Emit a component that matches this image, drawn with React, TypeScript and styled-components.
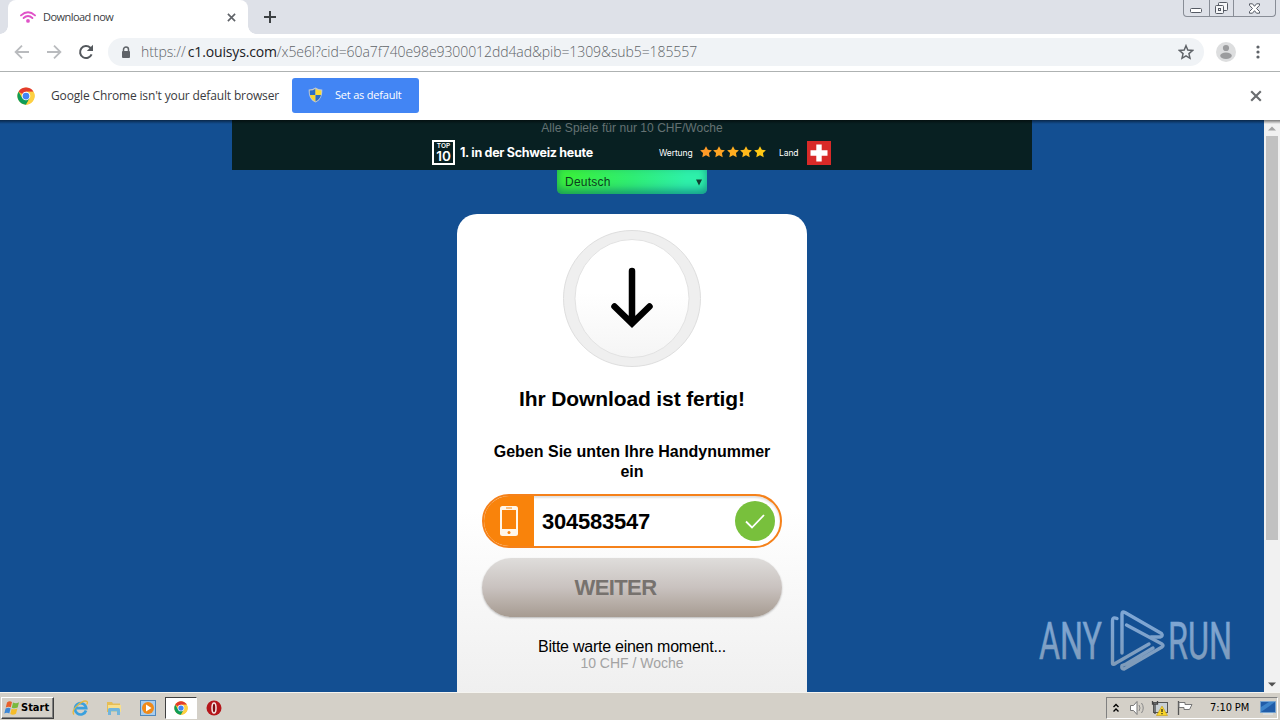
import React from 'react';
import styled, { createGlobalStyle } from 'styled-components';

const ui = "'Open Sans', 'Noto Sans', sans-serif";
const arial = "'Liberation Sans', Arial, sans-serif";
const tahoma = "'DejaVu Sans Condensed', 'DejaVu Sans', sans-serif";

const GlobalStyle = createGlobalStyle`
  * {
    box-sizing: border-box;
  }

  body {
    margin: 0;
    overflow: hidden;
    font-family: ${arial};
  }

  svg {
    display: block;
    flex-shrink: 0;
  }
`;

const Screen = styled.div`
  width: 1280px;
  height: 720px;
  display: flex;
  flex-direction: column;
  overflow: hidden;
  background: #fff;
`;

const TabStrip = styled.header`
  height: 34px;
  flex-shrink: 0;
  display: flex;
  justify-content: space-between;
  background: #dee1e8;
`;

const Tabs = styled.div`
  display: flex;
  align-items: center;
  padding-left: 8px;
`;

const Tab = styled.div`
  position: relative;
  width: 240px;
  height: 34px;
  display: flex;
  align-items: center;
  padding: 0 12px;
  border-radius: 8px 8px 0 0;
  background: #fff;

  &::before,
  &::after {
    content: '';
    position: absolute;
    bottom: 0;
    width: 8px;
    height: 8px;
  }

  &::before {
    left: -8px;
    background: radial-gradient(circle at 0 0, transparent 7.5px, #fff 8px);
  }

  &::after {
    right: -8px;
    background: radial-gradient(circle at 100% 0, transparent 7.5px, #fff 8px);
  }
`;

const TabTitle = styled.span`
  flex: 1;
  margin-left: 7px;
  font: 400 11px/16px ${ui};
  letter-spacing: -0.55px;
  color: #3c4043;
  white-space: nowrap;
`;

const NewTab = styled.div`
  margin-left: 16px;
`;

const WindowButtons = styled.div`
  display: flex;
  width: 93px;
  height: 17px;
  margin-right: 4px;
  border: 1px solid #888d96;
  border-top: none;
  border-radius: 0 0 4px 4px;
`;

const WindowButton = styled.div<{ $width: number }>`
  width: ${p => p.$width}px;
  display: flex;
  align-items: center;
  justify-content: center;

  & + & {
    border-left: 1px solid #888d96;
  }
`;

const Toolbar = styled.nav`
  height: 38px;
  flex-shrink: 0;
  display: flex;
  align-items: center;
  padding: 0 10px 1px 14px;
  border-bottom: 1px solid #aeb2b2;
`;

const Reload = styled.div`
  margin: 0 14px 0 16px;
`;

const Forward = styled.div`
  margin-left: 16px;
`;

const AddressBar = styled.div`
  width: 1096px;
  height: 28px;
  flex-shrink: 0;
  display: flex;
  align-items: center;
  justify-content: space-between;
  padding: 0 10px 0 12px;
  border-radius: 14px;
  background: #f0f3f6;
`;

const Address = styled.div`
  display: flex;
  align-items: center;
  gap: 9px;
`;

const Url = styled.span`
  font: 300 14px/20px ${ui};
  letter-spacing: -0.08px;
  color: #5f6468;
  white-space: nowrap;
`;

const Host = styled.span`
  margin-left: 2px;
  font-weight: 400;
  letter-spacing: -0.15px;
  color: #202124;
`;

const Avatar = styled.div`
  margin-left: 12px;
`;

const MenuDots = styled.div`
  margin-left: 20px;
`;

const InfoBar = styled.div`
  height: 48px;
  flex-shrink: 0;
  display: flex;
  align-items: center;
  padding: 0 18px 0 17px;
`;

const InfoText = styled.span`
  width: 257px;
  padding-left: 16px;
  margin-bottom: 1px;
  font: 400 12px/18px ${ui};
  letter-spacing: -0.15px;
  color: #3a3b3e;
  white-space: nowrap;
`;

const DefaultButton = styled.button`
  width: 127px;
  height: 35px;
  display: flex;
  align-items: center;
  gap: 12px;
  margin: 0 auto 2px 0;
  padding: 0 0 0 16px;
  border: none;
  border-radius: 3px;
  background: #4285f4;
  color: #fff;
  font: 400 11px/16px ${ui};
  letter-spacing: -0.2px;
  white-space: nowrap;
`;

const Viewport = styled.div`
  position: relative;
  height: 572px;
  flex-shrink: 0;
  display: flex;

  &::before {
    content: '';
    position: absolute;
    left: 0;
    top: 0;
    width: 100%;
    height: 4px;
    z-index: 1;
    background: linear-gradient(rgba(0, 0, 0, 0.5), transparent);
  }
`;

const Page = styled.main`
  position: relative;
  flex: 1;
  height: 572px;
  display: flex;
  flex-direction: column;
  align-items: center;
  overflow: hidden;
  background: #134f92;
`;

const Banner = styled.div`
  width: 800px;
  height: 50px;
  flex-shrink: 0;
  display: flex;
  flex-direction: column;
  align-items: center;
  background: #082022;
`;

const BannerText = styled.div`
  height: 20px;
  font-size: 12px;
  line-height: 16px;
  letter-spacing: 0.05px;
  color: #657273;
`;

const BannerRow = styled.div`
  width: 400px;
  height: 25px;
  display: flex;
  align-items: center;
  color: #fff;
  font-family: Inter, sans-serif;
  white-space: nowrap;
`;

const TopTen = styled.div`
  width: 23px;
  height: 25px;
  display: flex;
  flex-direction: column;
  align-items: center;
  border: 2px solid #fff;
`;

const TopTenLabel = styled.span`
  font-size: 6.5px;
  font-weight: 600;
  line-height: 8px;
`;

const TopTenNumber = styled.span`
  font-size: 13.5px;
  font-weight: 600;
  line-height: 13px;
`;

const Rank = styled.span`
  width: 204px;
  padding: 0 0 1px 5px;
  font-size: 12.5px;
  font-weight: 700;
  letter-spacing: -0.28px;
`;

const BannerLabel = styled.span<{ $width: number }>`
  width: ${p => p.$width}px;
  font-size: 8.5px;
  letter-spacing: -0.1px;
`;

const Stars = styled.div`
  width: 79px;
  display: flex;
  gap: 1.4px;
  margin-bottom: 1px;
`;

const Language = styled.div`
  width: 150px;
  height: 24px;
  flex-shrink: 0;
  display: flex;
  align-items: center;
  justify-content: space-between;
  padding: 0 4px 0 8px;
  border-radius: 0 0 5px 5px;
  background: linear-gradient(100deg, #39f03f 10%, #2fed74 50%, #2ef0aa 85%);
  box-shadow: inset 0 -4px 8px rgba(0, 80, 110, 0.55);
  color: #0c3c20;
  font-size: 12px;
  letter-spacing: 0.25px;
`;

const Card = styled.section`
  width: 350px;
  height: 520px;
  flex-shrink: 0;
  display: flex;
  flex-direction: column;
  align-items: center;
  margin-top: 20px;
  padding-top: 16px;
  border-radius: 20px 20px 0 0;
  background: linear-gradient(#fff 57%, #eeeeee 95%);
  color: #000;
`;

const Title = styled.h1`
  margin: 20px 0 0;
  font-size: 21px;
  line-height: 24px;
  letter-spacing: -0.12px;
  white-space: nowrap;
`;

const Hint = styled.h2`
  width: 300px;
  margin: 31px 0 0;
  font-size: 16px;
  line-height: 20px;
  text-align: center;
`;

const PhoneField = styled.div`
  width: 300px;
  height: 54px;
  display: flex;
  align-items: center;
  margin-top: 12px;
  padding-right: 5px;
  border: 2px solid #f5811a;
  border-radius: 27px;
  overflow: hidden;
  background: #fff;
  box-shadow: inset 0 2px 2px rgba(0, 0, 0, 0.12);
`;

const PhoneBadge = styled.div`
  width: 50px;
  height: 50px;
  display: flex;
  align-items: center;
  justify-content: center;
  background: #f9830b;
`;

const PhoneNumber = styled.span`
  flex: 1;
  padding: 1px 0 0 8px;
  font-size: 22px;
  font-weight: 700;
  letter-spacing: -0.25px;
`;

const Submit = styled.button`
  width: 300px;
  height: 59px;
  margin-top: 10px;
  padding: 0 33px 0 0;
  border: none;
  border-radius: 30px;
  background: linear-gradient(#dfdddb, #c9c2bf 50%, #a69b91);
  box-shadow: 0 1px 2px rgba(0, 0, 0, 0.25);
  color: #77726e;
  font: 700 22px/26px ${arial};
  letter-spacing: -0.6px;
`;

const Wait = styled.p`
  margin: 21px 0 0;
  font-size: 16px;
  line-height: 17px;
  letter-spacing: -0.25px;
`;

const Price = styled.p`
  margin: 0;
  font-size: 14px;
  line-height: 16px;
  color: #a3a3a3;
`;

const Watermark = styled.div`
  position: absolute;
  left: 1036px;
  top: 488px;
`;

const ScrollBar = styled.div`
  width: 16px;
  display: flex;
  flex-direction: column;
  align-items: center;
  justify-content: space-between;
  background: #f1f1f1;
`;

const ScrollArrow = styled.div`
  height: 16px;
  display: flex;
  align-items: center;
`;

const Thumb = styled.div`
  width: 12px;
  height: 404px;
  margin-bottom: auto;
  background: #c1c1c1;
`;

const TaskBar = styled.footer`
  height: 28px;
  flex-shrink: 0;
  display: flex;
  align-items: center;
  padding: 2px 2px 0 1px;
  border-top: 1px solid #f5f4f0;
  background: #d4d0c8;
`;

const Start = styled.div`
  width: 53px;
  height: 22px;
  display: flex;
  align-items: center;
  gap: 1px;
  padding-left: 2px;
  border: 1px solid;
  border-color: #fff #404040 #404040 #fff;
  box-shadow: inset -1px -1px #808080;
  color: #000;
  font: 700 11px/14px ${tahoma};
`;

const QuickLaunch = styled.div`
  display: flex;
  align-items: center;
  margin-left: 9px;
`;

const TaskItem = styled.div<{ $active?: boolean }>`
  width: ${p => (p.$active ? 32 : 34)}px;
  height: 22px;
  display: flex;
  align-items: center;
  justify-content: center;
  border: 1px solid;
  border-color: ${p => (p.$active ? '#404040 #fff #fff #404040' : 'transparent')};
  background: ${p => (p.$active ? '#fff' : 'none')};

  & + &:last-child {
    margin-left: 1px;
  }
`;

const Tray = styled.div`
  width: 172px;
  height: 22px;
  display: flex;
  align-items: center;
  margin-left: auto;
  padding-left: 5px;
  border: 1px solid;
  border-color: #808080 #fff #fff #808080;
`;

const Clock = styled.span`
  width: 50px;
  margin-left: 15px;
  font: 400 11px/14px ${tahoma};
  letter-spacing: -0.1px;
  color: #000;
  white-space: nowrap;
`;

const ChromeLogo = ({ size }: { size: number }) => (
  <svg width={size} height={size} viewBox="0 0 48 48">
    <circle cx="24" cy="24" r="23" fill="#fbc02d" />
    <path d="M24 24 4.1 12.5A23 23 0 0 1 43.9 12.5H24z" fill="#e33b2e" />
    <path d="M4.1 12.5A23 23 0 0 0 24 47L34 29.8 24 24l-10 5.5z" fill="#0f9d58" />
    <path d="M24 12.5h19.9A23 23 0 0 1 24 47l10-17.3z" fill="#fdd042" />
    <circle cx="24" cy="24" r="11.5" fill="#fff" />
    <circle cx="24" cy="24" r="9" fill="#4285f4" />
  </svg>
);

const Cross = ({ size = 9, color = '#5f6368' }) => (
  <svg width={size} height={size} viewBox="0 0 10 10">
    <path d="M1 1l8 8M9 1L1 9" stroke={color} strokeWidth="1.8" />
  </svg>
);

const Arrow = ({ flip = false }) => (
  <svg width="16" height="16" viewBox="0 0 16 16">
    <path
      d={flip ? 'M1 8h13M8 1.6L14.4 8 8 14.4' : 'M15 8H2M8 1.6L1.6 8 8 14.4'}
      fill="none"
      stroke="#b9bbbe"
      strokeWidth="1.8"
    />
  </svg>
);

const Shield = () => (
  <svg width="15" height="16" viewBox="0 0 15 16">
    <path d="M7.5.5Q10.5 2.6 14.3 2.5C14.5 9 12.5 13.2 7.5 15.6 2.5 13.2.5 9 .7 2.5Q4.5 2.6 7.5.5z" fill="#c2c9cf" />
    <path d="M7.5 1.7V8H2C1.8 6.5 1.7 5 1.8 3.6Q5 3.5 7.5 1.7z" fill="#2b6dc4" />
    <path d="M7.5 1.7V8H13C13.2 6.5 13.3 5 13.2 3.6Q10 3.5 7.5 1.7z" fill="#fadb32" />
    <path d="M7.5 14.4V8H2Q3 12.2 7.5 14.4z" fill="#f8d52c" />
    <path d="M7.5 14.4V8H13Q12 12.2 7.5 14.4z" fill="#2b6dc4" />
  </svg>
);

const starColors = ['#ff9b27', '#ffa423', '#ffad20', '#ffb81b', '#ffc814'];

const Star = ({ color }: { color: string }) => (
  <svg width="12" height="12" viewBox="0 0 24 24">
    <path
      d="M12 .4l3.7 7 8.1 1.2-5.9 5.6 1.5 8.3L12 18.7l-7.4 3.8 1.5-8.3L.2 8.6l8.1-1.2z"
      fill={color}
    />
  </svg>
);

export default function App() {
  return (
    <Screen>
      <GlobalStyle />
      <TabStrip>
        <Tabs>
          <Tab>
            <svg width="16" height="12" viewBox="0 0 16 12">
              <g fill="none" stroke="#e052c8" strokeWidth="1.9" strokeLinecap="round">
                <path d="M1 4.4Q8-2 15 4.4" />
                <path d="M3.6 7Q8 3 12.4 7" />
              </g>
              <circle cx="8" cy="9.9" r="1.9" fill="#e052c8" />
            </svg>
            <TabTitle>Download now</TabTitle>
            <Cross size={9} />
          </Tab>
          <NewTab>
            <svg width="12" height="12" viewBox="0 0 12 12">
              <path d="M6 0v12M0 6h12" stroke="#3c4043" strokeWidth="2" />
            </svg>
          </NewTab>
        </Tabs>
        <WindowButtons>
          <WindowButton $width={25}>
            <svg width="12" height="15" viewBox="0 0 12 15">
              <rect x=".5" y="7.5" width="11" height="4" rx="1" fill="#fff" stroke="#555a64" />
            </svg>
          </WindowButton>
          <WindowButton $width={25}>
            <svg width="13" height="14" viewBox="0 0 13 14">
              <g fill="#f5f6f8" stroke="#555a64">
                <rect x="3.5" y="1.5" width="9" height="8" rx="1" />
                <rect x=".5" y="4.5" width="8" height="8" rx="1" />
                <rect x="3.5" y="7.5" width="2" height="2" />
              </g>
            </svg>
          </WindowButton>
          <WindowButton $width={42}>
            <svg width="11" height="11" viewBox="0 0 11 11">
              <path
                d="M.5.8h3l2 2.5 2-2.5h3v1.5L7.5 5.5l3 3v1.7h-3l-2-2.5-2 2.5h-3V8.5l3-3-3-3.2z"
                fill="#fff"
                stroke="#555a64"
              />
            </svg>
          </WindowButton>
        </WindowButtons>
      </TabStrip>

      <Toolbar>
        <Arrow />
        <Forward>
          <Arrow flip />
        </Forward>
        <Reload>
          <svg width="16" height="16" viewBox="0 0 16 16">
            <path d="M13.6 10.4A6 6 0 1 1 12.3 3.8L14 5.5" fill="none" stroke="#54585d" strokeWidth="2" />
            <path d="M15 .8V7H8.8z" fill="#54585d" />
          </svg>
        </Reload>
        <AddressBar>
          <Address>
            <svg width="12" height="13" viewBox="0 0 12 13">
              <path d="M3.5 6V3.5a2.5 2.5 0 0 1 5 0V6" fill="none" stroke="#5f6368" strokeWidth="1.5" />
              <rect x="2" y="5" width="8" height="7" rx="1" fill="#5f6368" />
            </svg>
            <Url>
              https://<Host>c1.ouisys.com</Host>/x5e6l?cid=60a7f740e98e9300012dd4ad&amp;pib=1309&amp;sub5=185557
            </Url>
          </Address>
          <svg width="16" height="16" viewBox="0 0 24 24">
            <path
              d="M12 2.5l2.7 6.6 7.1.6-5.4 4.7 1.6 7-6-3.7-6 3.7 1.6-7-5.4-4.7 7.1-.6z"
              fill="none"
              stroke="#5f6368"
              strokeWidth="2.2"
            />
          </svg>
        </AddressBar>
        <Avatar>
          <svg width="20" height="20" viewBox="0 0 20 20">
            <circle cx="10" cy="10" r="10" fill="#dddedf" />
            <circle cx="10" cy="6" r="3.1" fill="#9b9c9e" />
            <ellipse cx="10" cy="13.8" rx="5.8" ry="3.2" fill="#9b9c9e" />
          </svg>
        </Avatar>
        <MenuDots>
          <svg width="4" height="14" viewBox="0 0 4 14">
            <g fill="#5f6368">
              <circle cx="2" cy="2" r="1.6" />
              <circle cx="2" cy="7" r="1.6" />
              <circle cx="2" cy="12" r="1.6" />
            </g>
          </svg>
        </MenuDots>
      </Toolbar>

      <InfoBar>
        <ChromeLogo size={18} />
        <InfoText>Google Chrome isn't your default browser</InfoText>
        <DefaultButton>
          <Shield />
          Set as default
        </DefaultButton>
        <Cross size={12} color="#6a6d70" />
      </InfoBar>

      <Viewport>
        <Page>
          <Banner>
            <BannerText>Alle Spiele für nur 10 CHF/Woche</BannerText>
            <BannerRow>
              <TopTen>
                <TopTenLabel>TOP</TopTenLabel>
                <TopTenNumber>10</TopTenNumber>
              </TopTen>
              <Rank>1. in der Schweiz heute</Rank>
              <BannerLabel $width={41}>Wertung</BannerLabel>
              <Stars>
                {starColors.map(color => (
                  <Star key={color} color={color} />
                ))}
              </Stars>
              <BannerLabel $width={28}>Land</BannerLabel>
              <svg width="24" height="24" viewBox="0 0 24 24">
                <rect width="24" height="24" fill="#d82a28" />
                <path d="M12 3.5v17M3.5 12h17" stroke="#fff" strokeWidth="5.4" />
              </svg>
            </BannerRow>
          </Banner>
          <Language>
            Deutsch
            <svg width="8" height="7" viewBox="0 0 8 7">
              <path d="M1 .5h6L4 6.5z" fill="#123c30" />
            </svg>
          </Language>
          <Card>
            <svg width="138" height="137" viewBox="0 0 138 137">
              <defs>
                <linearGradient id="disc" x1="0" y1="0" x2="0" y2="1">
                  <stop offset=".45" stopColor="#fff" />
                  <stop offset="1" stopColor="#f5f5f5" />
                </linearGradient>
              </defs>
              <ellipse cx="69" cy="68.5" rx="68.5" ry="68" fill="#efefef" stroke="#dedede" />
              <ellipse cx="69" cy="68.5" rx="57" ry="59" fill="url(#disc)" stroke="#e2e2e2" />
              <path d="M69 41v50M51.5 76.5L69 93.5l17.5-17" fill="none" stroke="#000" strokeWidth="6.5" strokeLinecap="round" />
              <path d="M62 86h14l-7 7z" />
            </svg>
            <Title>Ihr Download ist fertig!</Title>
            <Hint>Geben Sie unten Ihre Handynummer ein</Hint>
            <PhoneField>
              <PhoneBadge>
                <svg width="18" height="30" viewBox="0 0 18 30">
                  <rect width="18" height="30" rx="2.5" fill="#fff6ea" />
                  <rect x="2" y="4" width="14" height="19" fill="#f9830b" />
                  <path d="M6 2h6" stroke="#f9830b" />
                  <circle cx="9" cy="26.5" r="1.5" fill="#f9830b" />
                </svg>
              </PhoneBadge>
              <PhoneNumber>304583547</PhoneNumber>
              <svg width="40" height="40" viewBox="0 0 40 40">
                <circle cx="20" cy="20" r="20" fill="#78c03c" />
                <path d="M11 20.5l6 6L29 14" fill="none" stroke="#fff" strokeWidth="1.8" />
              </svg>
            </PhoneField>
            <Submit>WEITER</Submit>
            <Wait>Bitte warte einen moment...</Wait>
            <Price>10 CHF / Woche</Price>
          </Card>
          <Watermark>
            <svg width="210" height="68" viewBox="0 0 210 68">
              <defs>
                <linearGradient id="mark" x1="0" y1="0" x2="0" y2="66" gradientUnits="userSpaceOnUse">
                  <stop offset=".2" stopColor="#7ea6d4" />
                  <stop offset=".85" stopColor="#7f9bb9" />
                </linearGradient>
              </defs>
              <g
                fill="url(#mark)"
                stroke="url(#mark)"
                strokeWidth=".5"
                fontFamily="Roboto, sans-serif"
                fontSize="51"
              >
                <text x="3" y="51" textLength="63" lengthAdjust="spacingAndGlyphs">ANY</text>
                <text x="132" y="51" textLength="64" lengthAdjust="spacingAndGlyphs">RUN</text>
              </g>
              <g fill="none" stroke="url(#mark)" strokeWidth="3.4" strokeLinecap="round" strokeLinejoin="round">
                <path d="M86 45V6q0-3 3-1.500L125.500 25.500q2 2.500-1.500 3.500L115 29" />
                <path d="M81 10.500q-4.500-2-4.500 2V55q0 2.500 3.500 0L113 36" />
                <path d="M90.500 17L126 36q2 1.500 0 3L88 61q-3 0-2-3.500l4-1.500 27-16" />
              </g>
            </svg>
          </Watermark>
        </Page>
        <ScrollBar>
          <ScrollArrow>
            <svg width="8" height="5" viewBox="0 0 8 5">
              <path d="M0 4.5L4 .5l4 4z" fill="#a3a3a3" />
            </svg>
          </ScrollArrow>
          <Thumb />
          <ScrollArrow>
            <svg width="8" height="5" viewBox="0 0 8 5">
              <path d="M0 .5h8l-4 4z" fill="#505050" />
            </svg>
          </ScrollArrow>
        </ScrollBar>
      </Viewport>

      <TaskBar>
        <Start>
          <svg width="16" height="16" viewBox="0 0 16 16">
            <path d="M3 2.5Q5.5.5 8 2L6.8 7.3Q4.5 6 1.8 7.5z" fill="#e8602c" />
            <path d="M9 2.5Q12 4 15 2.3L13.7 7.5Q10.5 9 7.8 7.7z" fill="#7ab93e" />
            <path d="M1.6 8.5Q4.5 7 6.6 8.4L5.3 13.5Q3 12 .3 13.5z" fill="#3d87d6" />
            <path d="M7.6 8.8Q10.5 10 13.4 8.6L12 13.7Q9 15.5 6.3 14z" fill="#f5bc29" />
          </svg>
          Start
        </Start>
        <QuickLaunch>
          <TaskItem>
            <svg width="17" height="16" viewBox="0 0 17 16">
              <path d="M14 10.5A5.6 5.6 0 1 1 14.2 8.2H4.5" fill="none" stroke="#3aa0dd" strokeWidth="2.7" />
              <path d="M2 14.5C-2 10 11-1 15 1.5q1 .8-.3 3" fill="none" stroke="#e8b93c" strokeWidth="1.3" />
            </svg>
          </TaskItem>
          <TaskItem>
            <svg width="16" height="16" viewBox="0 0 16 16">
              <path d="M1 2h5l1 1.5h7V12H1z" fill="#e6bd55" />
              <path d="M2 5h13v7H2z" fill="#f8df8c" />
              <path d="M2 15V9.5q0-1.5 1.5-1.5h9Q14 8 14 9.5V15h-3v-3.5H5V15z" fill="#72b5dc" />
            </svg>
          </TaskItem>
          <TaskItem>
            <svg width="16" height="16" viewBox="0 0 16 16">
              <rect x=".5" y=".5" width="15" height="15" fill="#a8cdee" stroke="#4f88bd" />
              <circle cx="8" cy="8" r="6" fill="#f08a19" />
              <path d="M6 4.5l5.5 3.5L6 11.5z" fill="#fff" />
            </svg>
          </TaskItem>
          <TaskItem $active>
            <ChromeLogo size={14} />
          </TaskItem>
          <TaskItem>
            <svg width="16" height="16" viewBox="0 0 16 16">
              <circle cx="8" cy="8" r="7.5" fill="#b5161b" />
              <ellipse cx="8" cy="8" rx="2" ry="5" fill="#7f0c10" stroke="#f6e9e8" strokeWidth="1.5" />
            </svg>
          </TaskItem>
        </QuickLaunch>
        <Tray>
          <svg width="8" height="10" viewBox="0 0 8 10">
            <path d="M1.5 4L4 1.5 6.5 4M1.5 8.5L4 6l2.5 2.5" fill="none" stroke="#000" strokeWidth="1.4" />
          </svg>
          <svg width="26" height="16" viewBox="-1 0 26 16">
            <path d="M9.5 5.5h3l3.5-4v13l-3.5-4h-3z" fill="#fff" stroke="#777" />
            <path d="M18 5q2 3 0 6M20.5 3q3.5 5 0 10" fill="none" stroke="#888" />
          </svg>
          <svg width="23" height="16" viewBox="-1 0 23 16">
            <rect x="6.5" y="2.5" width="14" height="10" fill="#c9d0d4" stroke="#555" />
            <path d="M5.5 1v3h5V1M8 4v10" fill="none" stroke="#444" strokeWidth="1.3" />
            <path d="M15 6l5.5 9.5h-11z" fill="#f8d52a" stroke="#c39b12" strokeWidth=".6" />
            <path d="M15 9v3M15 13v1.2" stroke="#222" strokeWidth="1.2" />
          </svg>
          <svg width="26" height="16" viewBox="-1 0 26 16">
            <path d="M8.5 1v14" stroke="#555" strokeWidth="1.3" />
            <path d="M9 2.5h6v2h7l-2.5 5H14v-2H9z" fill="#fff" stroke="#777" />
          </svg>
          <Clock>7:10 PM</Clock>
          <svg width="16" height="14" viewBox="0 0 16 14">
            <path d="M.5.5h15v11H.5z" fill="#205ca8" stroke="#76a3cf" />
            <path d="M1 11V6l8-5h6z" fill="#3c83c9" />
            <path d="M3 13h10" stroke="#dfe8f0" />
          </svg>
        </Tray>
      </TaskBar>
    </Screen>
  );
}
